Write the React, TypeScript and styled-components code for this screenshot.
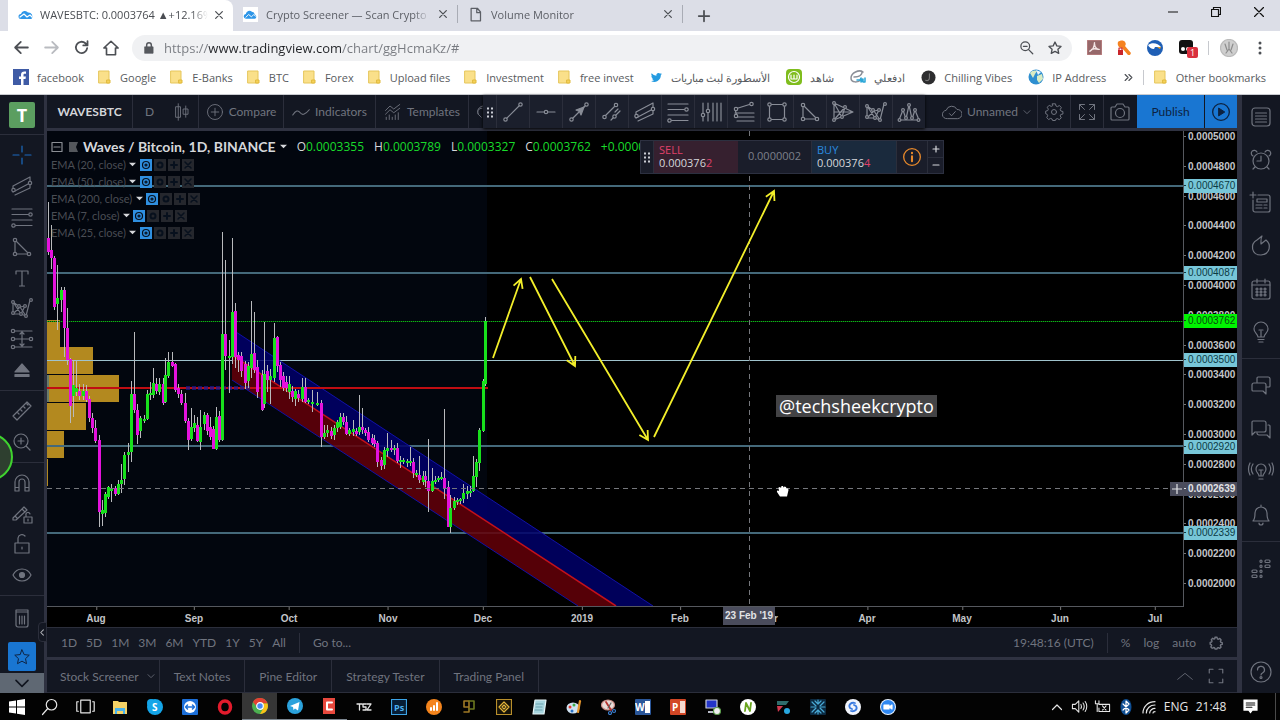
import React from "react";
import styled, { createGlobalStyle, css } from "styled-components";

const ui = `"Open Sans", "Noto Sans", sans-serif`;
const tv = `Lato, "Open Sans", sans-serif`;
const arial = `"Liberation Sans", Arial, sans-serif`;
const line = "#2b2e3b";
const panel = "#131722";
const frame = "#2f3241";
const muted = "#70747f";
const blue = "#1976d2";

const Global = createGlobalStyle`
  * { box-sizing: border-box; }
  body { margin: 0; background: #000; font-family: ${ui}; font-size: 12px; }
  button, input { font: inherit; color: inherit; border: 0; padding: 0; margin: 0; background: none; }
  button { display: flex; align-items: center; justify-content: center; cursor: pointer; white-space: nowrap; }
  a { color: inherit; text-decoration: none; }
  svg { display: block; flex: none; }
`;

/* ---------- icons ---------- */

const Svg = styled.svg<{ $size: number }>`
  width: ${(p) => p.$size}px;
  height: ${(p) => p.$size}px;
  fill: none;
  stroke: currentColor;
  stroke-width: 1.2;
  stroke-linecap: round;
  stroke-linejoin: round;
`;

type IconProps = { size?: number; children?: React.ReactNode; box?: number };
const Icon = ({ size = 24, box = 24, children }: IconProps) => (
  <Svg $size={size} viewBox={`0 0 ${box} ${box}`} aria-hidden="true">
    {children}
  </Svg>
);

const Dots = ({ at, r = 1.7 }: { at: [number, number][]; r?: number }) => (
  <>
    {at.map(([x, y]) => (
      <circle key={`${x}-${y}`} cx={x} cy={y} r={r} fill={panel} />
    ))}
  </>
);

const TrendLine = () => (<Icon><path d="M5 19 19 5" /><Dots at={[[4.5, 19.5], [19.5, 4.5]]} /></Icon>);
const HorizontalLine = () => (<Icon><path d="M3 12h18" /><Dots at={[[12, 12]]} /></Icon>);
const ArrowLine = () => (<Icon><path d="M5 19 19 5" /><path d="m17 7-3 8-1.500-3.500L9 10z" fill="currentColor" /><Dots at={[[4.5, 19.5], [19.5, 4.500]]} /></Icon>);
const RayLines = () => (<Icon><path d="M4 17 16 5M11 20 20 11M15 12l3-3" /><Dots at={[[4.500, 17], [16, 5], [14.500, 16.500]]} /></Icon>);
const Channel = () => (<Icon><path d="M3 12 20 3v6L3 18zM5 21 20 14V8" /><Dots at={[[3.500, 16], [20, 9]]} /></Icon>);
const FibLines = () => (<Icon><path d="M2 4h20M2 9.500h17M2 15h20M5 20.500h17" /><Dots at={[[20.500, 9.500], [3.500, 20.500]]} /></Icon>);
const VerticalFib = () => (<Icon><path d="M4 3v18M9 3v18M14 3v18M18 3v18M22 3v18" /><Dots at={[[4, 15], [9, 11]]} /></Icon>);
const FibFan = () => (<Icon><path d="M3 9 19 4M3 13h19M5 17h17M5 21h17M3 9l2 8" /><Dots at={[[4, 9], [19.500, 4], [4, 16]]} /></Icon>);
const RectTool = () => (<Icon><path d="M4.500 4.500h15v15h-15z" /><Dots at={[[4.500, 4.500], [19.500, 4.500], [4.500, 19.500], [19.500, 19.500]]} /></Icon>);
const TriangleTool = () => (<Icon><path d="M5 5v14h14z" /><Dots at={[[5, 5], [5, 19], [19, 19]]} /></Icon>);
const Gann = () => (<Icon><path d="M3 3v17L22 12 3 3l8 14L14 7 3 20M3 12l17 0" /><Dots r={1.400} at={[[3, 3], [3, 20], [11, 17], [14, 7]]} /></Icon>);
const Pattern = () => (<Icon><path d="M3 6v12l7-7 6 9 4-16M3 6l7 5 5-1-4 8zM3 18l8 0 5 2" /><Dots r={1.400} at={[[3, 6], [3, 17], [9, 10], [15, 10], [11, 18], [16, 20], [21, 4]]} /></Icon>);
const Waves = () => (<Icon><path d="m2 20 4-10 3 9 3-14 3 14 3-9 4 10M2 20h20" /><Dots r={1.400} at={[[2.500, 20], [6, 10], [9, 18], [12, 5], [15, 18], [18, 10], [21.500, 20]]} /></Icon>);
const Cross = () => (<Icon><path d="M12 3v6M12 15v6M3 12h6M15 12h6" stroke="#1c6bc0" /></Icon>);
const TextTool = () => (<Icon><path d="M6 8V5h12v3M12 5v15M9.500 20h5" /></Icon>);
const Measure = () => (<Icon><path d="M2 4h20M2 12h20M2 20h20M12 5v14M10 7l2-2 2 2M10 17l2 2 2-2" /><Dots at={[[3, 4], [3, 12], [21, 12], [3, 20]]} /></Icon>);
const Eject = () => (<Icon><path d="m12 6 7 8H5zM5 16.500h14v2H5z" fill="currentColor" /></Icon>);
const Ruler = () => (<Icon><path d="M3 17 17 3l4 4L7 21zM7 13l2 2M10 10l2 2M13 7l2 2M16 4l2 2" /></Icon>);
const ZoomIn = () => (<Icon><circle cx="11" cy="11" r="7" /><path d="M11 8v6M8 11h6M16.500 16.500 20 20" /></Icon>);
const Magnet = () => (<Icon><path d="M5 20v-9a7 7 0 0 1 14 0v9h-4v-9a3 3 0 0 0-6 0v9zM5 16.500h4M15 16.500h4" /></Icon>);
const PencilLock = () => (<Icon><path d="m3 16 11-11 3 3L6 18H3zM5 14l2 2M12 7l3 3M14 15h8v6h-8zM16 15v-2a2 2 0 0 1 4-1M18 17v2" /></Icon>);
const Lock = () => (<Icon><path d="M5 11h14v10H5zM8 11V6a4 4 0 0 1 7-2M12 15v2" /></Icon>);
const Eye = () => (<Icon><path d="M3 12c4-8 14-8 18 0-4 8-14 8-18 0z" /><circle cx="12" cy="12" r="2.500" fill="currentColor" /></Icon>);
const Trash = () => (<Icon><path d="M6 6h12v13a2 2 0 0 1-2 2H8a2 2 0 0 1-2-2zM6 6V4h12v2M9.500 10v8M12 10v8M14.500 10v8" /></Icon>);
const Star = ({ size = 24 }: { size?: number }) => (<Icon size={size}><path d="m12 3.500 2.600 5.600 6.100.7-4.500 4.200 1.200 6-5.400-3-5.400 3 1.200-6L3.300 9.800l6.100-.7z" /></Icon>);
const Chevron = ({ size = 10, up }: { size?: number; up?: boolean }) => (
  <Icon size={size}><path d={up ? "m3 17 9-9 9 9" : "m3 8 9 9 9-9"} strokeWidth="2.400" /></Icon>
);

const List = () => (<Icon><rect x="3" y="3" width="18" height="18" rx="3" /><path d="M6.500 8h11M6.500 11h11M6.500 14h11M6.500 17h11" /></Icon>);
const Alarm = () => (<Icon><circle cx="12" cy="13" r="8" /><path d="M12 8v5H8M4 8a3 3 0 1 1 4-4M16 4a3 3 0 1 1 4 4M6 19l-2 2M18 19l2 2" /></Icon>);
const News = () => (<Icon><path d="M9 4h10a2 2 0 0 1 2 2v13a2 2 0 0 1-2 2H6a2 2 0 0 1-2-2V9M4 1v6M1 4h6M8 8h10v3H8zM7 14h6M15 14h3M7 17h6M15 17h3" /></Icon>);
const Fire = () => (<Icon><path d="M13 2c-1.500 2.500-1 5-1 8l5-4c5 4 5 14-5 15C2 21 1 10 8 6l5-4z" /></Icon>);
const Calendar = () => (<Icon><rect x="3" y="4" width="18" height="18" rx="2" /><path d="M3 8h18M8 2v4M16 2v4" />{[12, 15, 18].map((y) => [8, 12, 16].map((x) => <circle key={`${x}${y}`} cx={x} cy={y} r="1" />))}</Icon>);
const Bulb = () => (<Icon><path d="M9 17c0-3-4-4-4-8a7 7 0 0 1 14 0c0 4-4 5-4 8zM9 19.500h6M10 22h4M12 17v-6M10 10h4" /></Icon>);
const Chat = () => (<Icon><path d="M8 8V4a1 1 0 0 1 1-1h10a2 2 0 0 1 2 2v7a1 1 0 0 1-1 1h-2M5 9h10a2 2 0 0 1 2 2v9l-3-3H4a1 1 0 0 1-1-1v-5a2 2 0 0 1 2-2z" /></Icon>);
const Chats = () => (<Icon><path d="M3 18V5a1 1 0 0 1 1-1h11a2 2 0 0 1 2 2v7a2 2 0 0 1-2 2H6zM19 8h1a1 1 0 0 1 1 1v12l-3-3H10a2 2 0 0 1-2-2" /></Icon>);
const Broadcast = () => (<Icon size={28} box={28}><path d="M12 18c0-3-3-3-3-7a5 5 0 0 1 10 0c0 4-3 4-3 7zM12 21h4M14 18v-6M12 12h4M6 6c-2 3-2 7 0 10M22 6c2 3 2 7 0 10M3 5c-2 4-2 8 0 12M25 5c2 4 2 8 0 12" /></Icon>);
const Bell = () => (<Icon><path d="M4 18c2-2 2-4 2-8a6 6 0 0 1 12 0c0 4 0 6 2 8zM10 20a2 2 0 0 0 4 0M12 2v2" /></Icon>);
const Panels = () => (<Icon>{[[11, 3, 2], [11, 8, 2], [16, 3, 5], [16, 8, 5], [3, 13, 5], [3, 18, 5], [11, 13, 2], [11, 18, 2]].map(([x, y, w]) => <rect key={`${x}${y}`} x={x} y={y} width={w} height="2.500" rx="1" />)}</Icon>);
const Help = () => (<Icon><circle cx="12" cy="12" r="10" /><path d="M8.500 10a3.500 3.500 0 1 1 5 3c-1 .5-1.500 1-1.500 2" /><circle cx="12" cy="17.500" r="1" /></Icon>);
const Gear = ({ size = 22, weight = 1.2 }: { size?: number; weight?: number }) => (
  <Icon size={size}>
    <path strokeWidth={weight} d="M10.200 3h3.600l.6 2.600 1.700.8 2.400-1.400 2.300 2.500-1.300 2.300.7 1.800 2.500.6v3l-2.600.6-.7 1.700 1.400 2.300-2.500 2.200-2.200-1.300-1.800.7-.6 1.600h-3.400l-.6-1.800-1.800-.7-2.300 1.300-2.400-2.300 1.300-2.200-.7-1.700L2 14.800v-3l2.500-.7.7-1.700L3.900 7.100l2.400-2.400 2.300 1.400 1.500-.7z" transform="translate(0 -.8)" />
    {weight < 2 && <circle cx="12" cy="12" r="3" />}
  </Icon>
);
const Expand = () => (<Icon size={20}><path d="M3 9V3h6M3 3l6 6M21 9V3h-6M21 3l-6 6M3 15v6h6M3 21l6-6M21 15v6h-6M21 21l-6-6" /></Icon>);
const Camera = () => (<Icon><path d="M4 7h3l2-3h6l2 3h3a1 1 0 0 1 1 1v11a1 1 0 0 1-1 1H4a1 1 0 0 1-1-1V8a1 1 0 0 1 1-1z" /><circle cx="12" cy="13" r="4.500" /></Icon>);
const CloudCheck = () => (<Icon size={20}><path d="M6 20a5 5 0 0 1-1-10 7 7 0 0 1 13-1 5.500 5.500 0 0 1 1 11zM9 14l2.500 2.500 4.500-5" /></Icon>);
const Candles = () => (<Icon size={18}><path d="M7 1v22M4 5h6v14H4zM17 4v15M14 8h6v7h-6z" fill={panel} /></Icon>);
const PlusCircle = () => (<Icon size={18}><circle cx="12" cy="12" r="10" /><path d="M12 7v10M7 12h10" /></Icon>);
const Wave = () => (<Icon size={18}><path d="M1 16c4-6 7-7 10-3s7 2 12-4" strokeWidth="1.500" /></Icon>);
const TemplatesIcon = () => (<Icon size={18}><path d="m2 10 6-6 5 4 8-6M2 15l6-6 5 4 8-6M3 22v-3M7 22v-6M11 22v-3M15 22v-6M19 22v-9" /></Icon>);
const Fullscreen = () => (<Icon size={18}><path d="M3 8V3h5M16 3h5v5M21 16v5h-5M8 21H3v-5" strokeWidth="1.500" /></Icon>);

/* ---------- browser chrome ---------- */

const Page = styled.div`
  display: flex;
  flex-direction: column;
  min-height: 100vh;
  position: relative;
  overflow: hidden;
`;

const TabStrip = styled.div`
  display: flex;
  height: 31px;
  padding-left: 8px;
  background: #dcdee7;
  color: #5c5f66;
`;

const Tab = styled.div<{ $active?: boolean }>`
  display: flex;
  align-items: center;
  width: 225px;
  padding: 0 9px 0 10px;
  ${(p) =>
    p.$active
      ? css`
          gap: 6px;
          height: 31px;
          padding-bottom: 2px;
          background: #fff;
          border-radius: 0 8px 0 0;
          color: #4a4d52;
        `
      : css`
          gap: 8px;
          border-right: 1px solid #a9acb5;
          height: 18px;
          margin-top: 5px;
        `}
`;

const TabTitle = styled.span`
  flex: 1;
  overflow: hidden;
  white-space: nowrap;
  font-size: 11px;
  mask-image: linear-gradient(90deg, #000 90%, transparent);
`;

const ChromeButton = styled.button<{ $w?: number; $dim?: boolean }>`
  width: ${(p) => p.$w ?? 30}px;
  color: ${(p) => (p.$dim ? "#b9bbc0" : "#4c4f54")};
`;

const WindowButtons = styled.div`
  display: flex;
  height: 24px;
  margin-left: auto;
`;

const WindowButton = styled.button`
  width: 43px;
  color: #111;
`;

const NavBar = styled.div`
  display: flex;
  align-items: center;
  height: 33px;
  padding: 0 9px 0 6px;
  background: #fff;
`;

const Omnibox = styled.div`
  display: flex;
  align-items: center;
  flex: 1;
  height: 26px;
  margin: 0 7px 0 6px;
  padding: 0 7px 0 10px;
  border-radius: 13px;
  background: #f0f1f3;
  color: #55585d;
  gap: 8px;
`;

const Url = styled.input`
  flex: 1;
  min-width: 0;
  outline: 0;
  font-size: 13px;
  color: transparent;
  background: linear-gradient(90deg, #777a80 44px, #222428 44px, #222428 178px, #777a80 178px);
  background-clip: text;
`;

const Bookmarks = styled.nav`
  display: flex;
  align-items: center;
  height: 31px;
  padding: 0 14px 4px 13px;
  gap: 12px;
  background: #fff;
  color: #585b60;
  font-size: 11px;
  border-bottom: 1px solid #c9cbd0;
`;

const Bookmark = styled.a<{ $wide?: boolean }>`
  display: flex;
  align-items: center;
  gap: 8px;
  padding-left: ${(p) => (p.$wide ? 4 : 0)}px;
  white-space: nowrap;
`;

const Rule = styled.i<{ $h: number; $c?: string }>`
  width: 1px;
  height: ${(p) => p.$h}px;
  background: ${(p) => p.$c ?? "#c7c9ce"};
  flex: none;
`;

const Extensions = styled.div`
  display: flex;
  padding-right: 5px;
`;

const OtherBookmarks = styled.div`
  display: flex;
  align-items: center;
  gap: 8px;
  margin-left: auto;
`;

const CloudLogo = () => (
  <Icon size={15} box={16}>
    <path d="M0 0h16v16H0z" fill="#fff" stroke="none" />
    <path d="M3.500 12.500a2.500 2.500 0 0 1-.5-5A4 4 0 0 1 9.500 5a3.500 3.500 0 0 1 3 3 2.500 2.500 0 0 1 .5 4.500z" fill="#2e96e8" stroke="none" />
    <path d="m3 11 3-3 3 2.500L11.500 8l2 2" stroke="#fff" strokeWidth="1" />
  </Icon>
);
const CloseIcon = () => (<Icon size={10}><path d="M4 4l16 16M20 4 4 20" strokeWidth="3" /></Icon>);
const Folder = () => (
  <Icon size={16} box={16}>
    <path d="M3 2h10v12H3z" fill="#fae08a" stroke="#e6c65a" strokeWidth="1" />
    <path d="M11 11h3v3h-3z" fill="#f6d25a" stroke="#e0b93c" strokeWidth="1" />
  </Icon>
);
const Facebook = () => (
  <Icon size={16} box={16}>
    <path d="M0 0h16v16H0z" fill="#3f5ba5" stroke="none" />
    <path d="M10.500 16V10h2l.4-2.500h-2.400V6c0-.8.400-1.300 1.300-1.300H13V2.600C10 2 8 3 8 5.600v1.900H6V10h2v6z" fill="#fff" stroke="none" />
  </Icon>
);
const Twitter = () => (
  <Icon size={13}>
    <path d="M22 5.500c-.8.400-1.600.6-2.400.7.900-.5 1.500-1.300 1.800-2.300-.8.500-1.700.8-2.600 1A4.200 4.200 0 0 0 11.700 8.700 12 12 0 0 1 3 4.300c-1.100 2-.6 4.300 1.300 5.600-.7 0-1.300-.2-1.900-.5 0 2 1.400 3.800 3.400 4.200-.6.200-1.300.2-1.900.1.500 1.700 2.100 2.900 3.900 2.900A8.500 8.500 0 0 1 2 18.400 12 12 0 0 0 20 8z" fill="#249be0" stroke="none" />
  </Icon>
);
const Shahid = () => (
  <Icon size={16} box={16}>
    <rect width="16" height="16" rx="4" fill="#7fbd1d" stroke="none" />
    <circle cx="8" cy="8" r="5.500" stroke="#fff" />
    <path d="M5 6v4h6V6M8 6v4" stroke="#fff" />
  </Icon>
);
const Edfaly = () => (
  <Icon size={16} box={16}>
    <path d="M13 3C9 0 1 4 1 9c0 5 7 5 11 1M4 8c3 0 8-1 8-5" stroke="#8b8f98" strokeWidth="1.500" />
    <path d="M7 11h3l1-2v4l2-3v3h2V9" stroke="#2aa6d8" strokeWidth="1.500" />
  </Icon>
);
const Vibes = () => (
  <Icon size={15} box={16}>
    <circle cx="8" cy="8" r="7.500" fill="#2d2d2f" stroke="none" />
    <path d="M5 11c2 1 4 0 4-3V4" stroke="#777" />
  </Icon>
);
const Globe = () => (
  <Icon size={16} box={16}>
    <circle cx="8" cy="8" r="7.500" fill="#2f8fd0" stroke="none" />
    <path d="M2 4c2-3 6-3 7-2L7 5 5 9zM9 7l5-2 1 5-4 4-2-3z" fill="#d9ecc4" stroke="none" />
    <path d="M8 1l5 2-3 3z" fill="#e9f6ff" stroke="none" />
  </Icon>
);

const bookmarks: [string, React.ReactNode, boolean?][] = [
  ["facebook", <Facebook />],
  ["Google", <Folder />],
  ["E-Banks", <Folder />],
  ["BTC", <Folder />],
  ["Forex", <Folder />],
  ["Upload files", <Folder />],
  ["Investment", <Folder />],
  ["free invest", <Folder />],
  ["الأسطورة لبث مباريات", <Twitter />, true],
  ["شاهد", <Shahid />, true],
  ["ادفعلي", <Edfaly />, true],
  ["Chilling Vibes", <Vibes />, true],
  ["IP Address", <Globe />, true],
];

const Browser = () => (
  <header>
    <TabStrip>
      <Tab $active>
        <Icon size={16} box={16}><path d="M3 12a2.500 2.500 0 0 1 0-5 4 4 0 0 1 7-1.500A4 4 0 0 1 13.500 12z" fill="#2e96e8" stroke="none" /><path d="m2 10 4-3 3 3 3-2 2 2" stroke="#fff" /></Icon>
        <TabTitle>WAVESBTC: 0.0003764 ▲+12.16%</TabTitle>
        <ChromeButton $w={10} aria-label="Close tab"><CloseIcon /></ChromeButton>
      </Tab>
      <Tab>
        <CloudLogo />
        <TabTitle>Crypto Screener — Scan Crypto A</TabTitle>
        <ChromeButton $w={10} aria-label="Close tab"><CloseIcon /></ChromeButton>
      </Tab>
      <Tab>
        <Icon size={15}><path d="M5 2h10l5 6v14H5zM14 2v7h6" strokeWidth="2" /></Icon>
        <TabTitle>Volume Monitor</TabTitle>
        <ChromeButton $w={10} aria-label="Close tab"><CloseIcon /></ChromeButton>
      </Tab>
      <ChromeButton $w={41} aria-label="New tab"><Icon size={14}><path d="M12 3v18M3 12h18" strokeWidth="3" /></Icon></ChromeButton>
      <WindowButtons>
        <WindowButton aria-label="Minimise"><Icon size={10} box={10}><path d="M0 5h10" /></Icon></WindowButton>
        <WindowButton aria-label="Restore"><Icon size={10} box={10}><path d="M.5 2.500h7v7h-7zM2.500 2.500v-2h7v7h-2" /></Icon></WindowButton>
        <WindowButton aria-label="Close"><Icon size={10} box={10}><path d="m.5.5 9 9M9.500.5l-9 9" /></Icon></WindowButton>
      </WindowButtons>
    </TabStrip>
    <NavBar>
      <ChromeButton aria-label="Back"><Icon size={17}><path d="M21 12H4M11 4l-8 8 8 8" strokeWidth="2.500" /></Icon></ChromeButton>
      <ChromeButton $dim aria-label="Forward"><Icon size={17}><path d="M3 12h17M13 4l8 8-8 8" strokeWidth="2.500" /></Icon></ChromeButton>
      <ChromeButton aria-label="Reload"><Icon size={17}><path d="M20 13a8 8 0 1 1-2.500-7L20 8.500M20.500 3v6h-6" strokeWidth="2.500" /></Icon></ChromeButton>
      <ChromeButton aria-label="Home"><Icon size={18}><path d="M6 12H2.500L12 3l9.500 9H18v9H6z" strokeWidth="2.200" /></Icon></ChromeButton>
      <Omnibox>
        <Icon size={14}><path d="M5 10h14v11H5z" fill="currentColor" /><path d="M8 10V7a4 4 0 0 1 8 0v3" strokeWidth="2.500" /></Icon>
        <Url aria-label="Address" defaultValue="https://www.tradingview.com/chart/ggHcmaKz/#" />
        <ChromeButton $w={21} aria-label="Zoom"><Icon size={15}><circle cx="10" cy="10" r="7" strokeWidth="2" /><path d="m15 15 7 7M7 10h6" strokeWidth="2" /></Icon></ChromeButton>
        <ChromeButton $w={20} aria-label="Bookmark"><Icon size={16}><path d="m12 3 2.700 5.800 6.300.8-4.600 4.300 1.200 6.200-5.600-3-5.600 3 1.200-6.200L3 9.600l6.300-.8z" strokeWidth="2" /></Icon></ChromeButton>
      </Omnibox>
      <Extensions>
        <ChromeButton aria-label="Acrobat"><Icon size={15} box={16}><path d="M0 0h16v16H0z" fill="#96686a" stroke="#c98a8a" /><path d="M8 3c0 5-3 8-5 9M8 4c0 4 3 6 5 6M5 10c2-1 4-1 7 0" stroke="#f3e5e5" strokeWidth="1.500" /></Icon></ChromeButton>
        <ChromeButton aria-label="Key"><Icon size={16} box={16}><path d="M2 2c2-2 6-2 7 0 1 1 1 3 0 4l6 7-1 2h-2L6 8C3 8 1 5 2 2z" fill="#f58220" stroke="none" /><path d="M2 10h5v5H2z" fill="#c9252b" stroke="none" /><path d="M3 10V8h3v2" stroke="#c9252b" /></Icon></ChromeButton>
        <ChromeButton $w={32} aria-label="Eagle"><Icon size={16} box={16}><circle cx="8" cy="8" r="8" fill="#1f5fb5" stroke="none" /><path d="M1 5c4-3 10-2 13 2l-6 0-1 2C4 9 2 7 1 5z" fill="#fff" stroke="none" /><path d="M10 7l4 0-1 2z" fill="#f3a01e" stroke="none" /></Icon></ChromeButton>
        <ChromeButton $w={32} aria-label="Monkey, 1 notice">
          <Icon size={22} box={22}><rect x="3" y="3" width="14" height="14" rx="3" fill="#111" stroke="none" /><circle cx="7" cy="12" r="2" fill="#fff" stroke="none" /><circle cx="12" cy="12" r="2" fill="#fff" stroke="none" /><rect x="11" y="10" width="11" height="11" rx="2" fill="#d9303e" stroke="none" /><text x="14" y="19" fontSize="9" fill="#fff" stroke="none">1</text></Icon>
        </ChromeButton>
      </Extensions>
      <Rule $h={14} />
      <ChromeButton $w={40} aria-label="Profile"><Icon size={18} box={18}><circle cx="9" cy="9" r="8.500" fill="#cfcfcf" stroke="#bbb" /><path d="M9 3v7l-3 4M9 10l3 4M5 5l2 6M13 5l-2 6" stroke="#8d8d8d" /></Icon></ChromeButton>
      <ChromeButton $w={22} aria-label="Menu"><Icon size={14} box={14}>{[2, 7, 12].map((y) => <circle key={y} cx="7" cy={y} r="1.500" fill="currentColor" stroke="none" />)}</Icon></ChromeButton>
    </NavBar>
    <Bookmarks aria-label="Bookmarks">
      {bookmarks.map(([name, icon, wide]) => (
        <Bookmark key={name} href="#" $wide={wide}>{icon}{name}</Bookmark>
      ))}
      <OtherBookmarks>
        <ChromeButton $w={12} aria-label="More bookmarks"><Icon size={9}><path d="m3 4 8 8-8 8M13 4l8 8-8 8" strokeWidth="3" /></Icon></ChromeButton>
        <Rule $h={15} />
        <Bookmark href="#"><Folder />Other bookmarks</Bookmark>
      </OtherBookmarks>
    </Bookmarks>
  </header>
);

/* ---------- trading workspace ---------- */

const Workspace = styled.main`
  display: flex;
  flex: 1;
  background: ${frame};
  color: ${muted};
  font-family: ${tv};
`;

const LeftRail = styled.aside`
  display: flex;
  flex-direction: column;
  width: 44px;
  margin-right: 3px;
  background: ${panel};
`;

const Avatar = styled.button`
  width: 26px;
  height: 26px;
  margin: 7px 9px 6px;
  border-radius: 2px;
  background: #5b9e60;
  color: #fff;
  font: bold 18px ${ui};
`;

const ToolGroup = styled.div<{ $h: number }>`
  display: flex;
  flex-direction: column;
  height: ${(p) => p.$h}px;
  padding: 5px 0;
  border-top: 1px solid ${line};
  button { flex: 1; min-height: 0; }
`;

const Favorites = styled.button`
  width: 28px;
  height: 29px;
  margin: auto 8px 2px;
  border-radius: 2px;
  background: ${blue};
  color: #0e2444;
`;

const RailMore = styled.button`
  height: 20px;
  background: #5f6873;
  color: #11151f;
`;

const RightRail = styled.aside`
  display: flex;
  flex-direction: column;
  width: 38px;
  margin-left: 5px;
  background: ${panel};
`;

const RailGroup = styled.div`
  padding: 5px 0;
  border-bottom: 1px solid ${line};
  &:first-child { padding-top: 0; }
  &:nth-child(3) { border: 0; }
`;

const RailButton = styled.button`
  width: 100%;
  height: 43px;
`;

const Center = styled.section`
  display: flex;
  flex-direction: column;
  flex: 1;
  min-width: 0;
`;

const TopBar = styled.div`
  position: relative;
  display: flex;
  height: 33px;
  margin-bottom: 3px;
  background: ${panel};
`;

const TopButton = styled.button<{ $w?: number; $strong?: boolean; $plain?: boolean }>`
  gap: 5px;
  width: ${(p) => (p.$w ? `${p.$w}px` : "auto")};
  border-right: ${(p) => (p.$plain ? 0 : 1)}px solid ${line};
  color: ${(p) => (p.$strong ? "#d3d5da" : "inherit")};
  font-weight: ${(p) => (p.$strong ? 700 : 400)};
`;

const TopRight = styled.div`
  display: flex;
  margin-left: auto;
`;

const Publish = styled.button<{ $w: number }>`
  width: ${(p) => p.$w}px;
  margin-left: 1px;
  background: ${blue};
  color: #0d2240;
`;

const FloatingTools = styled.div`
  position: absolute;
  top: 0;
  left: 436px;
  display: flex;
  height: 33px;
  padding-left: 1px;
  background: #1b1f2c;
  box-shadow: 0 1px 3px #000;
  color: #898d97;
`;

const FloatingTool = styled.button`
  width: 33px;
  border-left: 1px solid ${line};
`;

const Grip = styled.span`
  display: flex;
  align-items: center;
  justify-content: center;
  width: 12px;
  color: #c9ccd3;
`;

const GripDots = () => (
  <Icon size={12} box={12}>
    {[1.500, 5.500, 9.500].map((y) => [3, 7].map((x) => <rect key={`${x}${y}`} x={x} y={y} width="2" height="2" fill="currentColor" stroke="none" />))}
  </Icon>
);

const ChartArea = styled.div`
  display: grid;
  grid-template-columns: 1fr 54px;
  grid-template-rows: 1fr 20px;
  flex: 1;
  min-height: 476px;
  background: #000;
`;

const Plot = styled.div`
  position: relative;
  overflow: hidden;
  border-bottom: 1px solid #55585e;
`;

const PlotSvg = styled.svg`
  position: absolute;
  inset: 0;
  width: 100%;
  height: 100%;
`;

const Legend = styled.div`
  position: absolute;
  top: 6px;
  left: 4px;
  color: #4a4d54;
  font-size: 11px;
  white-space: nowrap;
`;

const LegendTitle = styled.div`
  display: flex;
  align-items: center;
  height: 19px;
  gap: 4px;
  color: #d5d7db;
  font-size: 14px;
  font-weight: 700;
`;

const Ohlc = styled.span`
  color: #d5d7db;
  font: 400 12px ${ui};
  margin-left: 6px;
  b { color: #19dc2b; font-weight: 400; }
`;

const StudyRow = styled.div`
  display: flex;
  align-items: center;
  height: 17px;
  gap: 2px;
`;

const StudyButton = styled.button<{ $on?: boolean }>`
  width: 12px;
  height: 12px;
  background: ${(p) => (p.$on ? "#2f8fe0" : "#25272d")};
  color: #07101d;
`;

const StudyCaret = styled.button`
  width: 10px;
  color: #d5d7db;
`;

const Quote = styled.div`
  position: absolute;
  top: 9px;
  left: 593px;
  display: flex;
  height: 34px;
  border: 1px solid #2c3040;
  background: #1a1d2a;
  color: #d5d7db;
  font: 11px/13px ${ui};
`;

const Side = styled.button<{ $tone: "sell" | "buy" }>`
  display: block;
  width: 85px;
  padding: 0 0 3px 5px;
  text-align: left;
  border-left: 1px solid ${line};
  background: ${(p) => (p.$tone === "sell" ? "#36202f" : "#1a2a3d")};
  span { display: block; color: ${(p) => (p.$tone === "sell" ? "#e0406a" : "#2a8ae0")}; }
  em { font-style: normal; color: #e0406a; }
`;

const Spread = styled.span`
  width: 73px;
  line-height: 30px;
  text-align: center;
  color: #7d808a;
`;

const InfoButton = styled.button`
  width: 31px;
  color: #e8892b;
  border-left: 1px solid ${line};
`;

const Stepper = styled.div`
  display: grid;
  width: 16px;
  border-left: 1px solid ${line};
  button + button { border-top: 1px solid ${line}; }
`;

const Handle = styled.div`
  position: absolute;
  top: 264px;
  left: 729px;
  padding: 0 3px;
  background: #434345;
  color: #fff;
  font: 18px/22px ${ui};
`;

const PriceAxis = styled.div`
  position: relative;
  border-left: 1px solid #55585e;
  font: bold 10px ${arial};
  color: #c3c5c9;
`;

const PriceLabel = styled.span<{ $bg?: string; $fg?: string }>`
  position: absolute;
  left: 0;
  right: 0;
  height: 14px;
  padding-left: 4px;
  line-height: 14px;
  transform: translateY(-50%);
  background: ${(p) => p.$bg ?? "transparent"};
  color: ${(p) => p.$fg ?? "inherit"};
  font-weight: ${(p) => (p.$fg && p.$fg !== "#e2e3e6" ? 400 : 700)};
  &::before {
    content: "";
    position: absolute;
    left: 0;
    top: 6px;
    width: 2px;
    height: 1px;
    background: ${(p) => p.$fg ?? "#777"};
  }
`;

const AddAlert = styled.button`
  position: absolute;
  right: 100%;
  width: 14px;
  height: 14px;
  transform: translateY(-50%);
  background: #4a4c5c;
  color: #e2e3e6;
`;

const TimeAxis = styled.div`
  position: relative;
  font: bold 10px ${arial};
  color: #c3c5c9;
`;

const TimeLabel = styled.span`
  position: absolute;
  top: 0;
  padding-top: 6px;
  transform: translateX(-50%);
  &::before {
    content: "";
    position: absolute;
    left: 50%;
    top: 0;
    width: 1px;
    height: 3px;
    background: #777;
  }
`;

const CrosshairDate = styled.span`
  position: absolute;
  top: 0;
  width: 52px;
  height: 18px;
  line-height: 18px;
  text-align: center;
  transform: translateX(-50%);
  background: #4a4c5c;
  color: #e2e3e6;
`;

const RangeBar = styled.div`
  display: flex;
  align-items: center;
  height: 30px;
  padding: 0 14px;
  border-top: 1px solid ${line};
  background: ${panel};
`;

const Ranges = styled.div`
  display: flex;
  gap: 9px;
`;

const GoTo = styled.button`
  height: 20px;
  margin-left: 13px;
  padding-left: 13px;
  border-left: 1px solid ${line};
`;

const RangeRight = styled.div`
  display: flex;
  align-items: center;
  gap: 13px;
  margin-left: auto;
`;

const Footer = styled.div`
  display: flex;
  height: 33px;
  margin-top: 3px;
  border-bottom: 1px solid ${line};
  background: ${panel};
`;

const FooterTab = styled.button`
  gap: 8px;
  padding: 0 14px;
  border-right: 1px solid ${line};
  &:first-child { padding: 0 4px 0 13px; }
`;

const FooterTools = styled.div`
  display: flex;
  gap: 14px;
  margin-left: auto;
  padding-right: 12px;
`;

/* price scale: the top of the plot and the height of one unit of the last digits */
const PLOT = { left: 47, top: 131, width: 1136, height: 475 };
const priceY = (p: number) => 137 + (5000 - p) * 0.14867;
const topOf = (p: number) => `${((priceY(p) - PLOT.top) / PLOT.height) * 100}%`;
const leftOf = (x: number) => `${((x - PLOT.left) / PLOT.width) * 100}%`;
const fmt = (p: number) => `0.000${p}`;

const scale = Array.from({ length: 16 }, (_, i) => 5000 - i * 200);
const levels = [4670, 4087, 3500, 2920, 2339];
const months: [string, number][] = [
  ["Aug", 96], ["Sep", 194], ["Oct", 289], ["Nov", 388], ["Dec", 483], ["2019", 582],
  ["Feb", 680], ["Mar", 769], ["Apr", 867], ["May", 962], ["Jun", 1060], ["Jul", 1155],
];

/* x, high, low, body top, body bottom, rising */
const candles: [number, number, number, number, number, 0 | 1][] = [
  [48, 202, 255, 238, 252, 0], [51, 225, 269, 250, 258, 0], [54, 256, 310, 258, 307, 0],
  [57, 265, 330, 298, 304, 1], [61, 287, 312, 290, 300, 1], [64, 287, 357, 290, 328, 0],
  [67, 308, 365, 328, 360, 0], [70, 358, 423, 359, 406, 0], [73, 360, 417, 385, 396, 1],
  [76, 360, 396, 388, 392, 1], [79, 384, 400, 391, 396, 0], [83, 384, 400, 391, 396, 1],
  [86, 385, 402, 391, 400, 0], [89, 396, 422, 399, 418, 0], [92, 413, 433, 418, 428, 0],
  [95, 420, 443, 428, 441, 0], [99, 435, 527, 440, 512, 0], [102, 500, 526, 510, 514, 1],
  [105, 492, 517, 494, 513, 1], [108, 486, 499, 487, 497, 1], [111, 484, 502, 488, 491, 1],
  [115, 486, 496, 488, 494, 0], [118, 480, 495, 484, 494, 1], [121, 464, 493, 480, 484, 1],
  [124, 452, 485, 455, 479, 1], [128, 443, 472, 452, 455, 1], [131, 381, 462, 394, 452, 1],
  [134, 332, 413, 394, 410, 0], [137, 404, 444, 410, 435, 0], [140, 416, 438, 418, 431, 1],
  [144, 415, 423, 419, 421, 1], [147, 390, 420, 394, 419, 1], [150, 382, 400, 393, 395, 1],
  [153, 368, 398, 383, 395, 1], [156, 378, 394, 384, 391, 0], [159, 378, 395, 384, 392, 1],
  [163, 378, 405, 384, 403, 0], [165, 358, 403, 375, 402, 1], [168, 352, 378, 362, 376, 1],
  [172, 352, 367, 362, 366, 0], [175, 363, 392, 364, 390, 0], [178, 384, 398, 388, 394, 0],
  [181, 390, 405, 394, 403, 0], [185, 393, 423, 403, 421, 0], [188, 418, 450, 421, 440, 0],
  [191, 408, 441, 427, 439, 1], [194, 415, 432, 423, 428, 1], [197, 417, 442, 425, 441, 0],
  [200, 410, 450, 427, 442, 1], [204, 412, 430, 415, 424, 1], [207, 413, 435, 415, 431, 0],
  [210, 417, 440, 427, 437, 0], [213, 426, 449, 429, 449, 0], [216, 407, 450, 417, 449, 1],
  [219, 411, 442, 416, 440, 0], [222, 232, 441, 334, 440, 1], [225, 260, 370, 334, 356, 0],
  [229, 340, 393, 356, 358, 1], [232, 238, 364, 312, 357, 1], [235, 303, 368, 311, 357, 0],
  [238, 352, 372, 355, 360, 0], [241, 352, 377, 356, 371, 0], [245, 361, 389, 364, 383, 0],
  [248, 362, 388, 366, 381, 1], [251, 301, 378, 354, 368, 1], [254, 312, 373, 353, 370, 0],
  [257, 360, 398, 367, 392, 0], [262, 370, 411, 375, 410, 0], [264, 322, 408, 374, 404, 1],
  [267, 365, 392, 371, 380, 0], [270, 369, 404, 376, 380, 1], [274, 323, 382, 338, 378, 1],
  [277, 336, 372, 337, 366, 0], [280, 362, 387, 365, 380, 0], [283, 372, 391, 376, 388, 0],
  [286, 376, 392, 382, 388, 0], [289, 376, 399, 384, 392, 1], [292, 386, 402, 391, 397, 0],
  [295, 389, 406, 391, 399, 1], [298, 390, 402, 394, 398, 0], [302, 378, 402, 387, 399, 1],
  [305, 378, 403, 387, 402, 0], [308, 398, 404, 400, 402, 1], [312, 390, 412, 402, 404, 1],
  [317, 392, 406, 403, 405, 1], [321, 400, 447, 403, 437, 0], [324, 425, 439, 433, 437, 1],
  [327, 425, 437, 430, 433, 1], [331, 427, 439, 431, 436, 0], [334, 425, 440, 428, 435, 1],
  [337, 420, 432, 422, 428, 1], [340, 413, 429, 417, 427, 1], [343, 413, 425, 417, 422, 0],
  [346, 416, 435, 422, 434, 0], [349, 428, 436, 430, 434, 1], [353, 420, 436, 429, 432, 1],
  [356, 428, 436, 431, 434, 0], [359, 395, 435, 427, 432, 1], [362, 408, 434, 427, 430, 0],
  [365, 428, 436, 430, 433, 0], [368, 427, 442, 432, 440, 0], [372, 434, 445, 438, 443, 0],
  [374, 435, 447, 440, 444, 0], [377, 441, 467, 443, 462, 0], [381, 457, 470, 460, 466, 0],
  [384, 447, 469, 450, 465, 1], [387, 433, 457, 448, 451, 1], [391, 440, 452, 448, 450, 0],
  [394, 445, 455, 448, 450, 1], [397, 443, 463, 448, 461, 0], [400, 456, 468, 460, 462, 1],
  [403, 458, 464, 460, 462, 1], [407, 459, 467, 461, 463, 1], [410, 447, 466, 461, 463, 1],
  [413, 458, 478, 462, 473, 0], [416, 470, 477, 473, 475, 1], [419, 456, 483, 475, 480, 0],
  [423, 471, 485, 476, 482, 1], [425, 471, 487, 476, 480, 0], [428, 439, 512, 481, 491, 0],
  [432, 468, 492, 481, 491, 1], [435, 476, 484, 480, 482, 1], [438, 476, 482, 478, 480, 1],
  [441, 472, 480, 477, 479, 1], [444, 409, 499, 478, 488, 0], [448, 481, 527, 487, 527, 0],
  [450, 495, 533, 508, 527, 1], [454, 497, 510, 501, 508, 1], [457, 498, 505, 500, 502, 1],
  [460, 498, 504, 499, 501, 1], [463, 484, 503, 493, 499, 1], [467, 486, 499, 491, 494, 1],
  [470, 486, 497, 491, 493, 1], [473, 456, 492, 476, 491, 1], [476, 459, 487, 462, 477, 1],
  [479, 428, 471, 430, 463, 1], [483, 379, 432, 381, 431, 1], [485, 317, 386, 321, 384, 1],
];

const profile: [number, number][] = [[320, 13], [347, 46], [375, 72], [403, 39], [431, 17], [459, 1]];

const arrows: [number, number, number, number][] = [
  [493, 358, 521, 279], [530, 277, 575, 366], [552, 279, 648, 440], [654, 437, 774, 191],
];

const arrowHead = ([x1, y1, x2, y2]: number[]) => {
  const a = Math.atan2(y2 - y1, x2 - x1);
  const tip = (d: number) => `${x2 - 10 * Math.cos(a + d)} ${y2 - 10 * Math.sin(a + d)}`;
  return `M${tip(0.5)}L${x2} ${y2}L${tip(-0.5)}`;
};

const Drawing = () => (
  <PlotSvg viewBox={`${PLOT.left} ${PLOT.top} ${PLOT.width} ${PLOT.height}`} preserveAspectRatio="none" role="img" aria-label="WAVESBTC daily candles">
    <path d="M47 131h440v475H47z" fill="#02060e" />
    {profile.map(([y, w]) => (
      <rect key={y} x="47" y={y} width={w} height="27" fill="#b3891f" />
    ))}
    <path d="M48 375v27" stroke="#1e6fb8" />
    {levels.map((p) =>
      p === 3500 ? (
        <path key={p} d="M47 360.500H1183" stroke="#9fc3cc" />
      ) : (
        <path key={p} d={`M47 ${Math.round(priceY(p))}H1183`} stroke="#44697a" strokeWidth="2" />
      )
    )}
    <path d="M236 332 653 606H616L236 357z" fill="#00006a" fillOpacity=".85" />
    <path d="M232 355 616 606H578L232 380z" fill="#640008" fillOpacity=".85" />
    <path d="M236 332 653 606M232 380 578 606" stroke="#1111a8" />
    <path d="M232 355 616 606" stroke="#c4101c" strokeWidth="1.500" />
    <path d="M47 388H488" stroke="#c00d12" strokeWidth="2" />
    <path d="M186 388h64" stroke="#1a1a96" strokeWidth="4" strokeDasharray="4 2" opacity=".7" />
    <path d="M47 321.500H1183" stroke="#053f08" />
    <path d="M47 321.500H1183" stroke="#0cb416" strokeDasharray="1 1" />
    <g shapeRendering="crispEdges">
      {candles.map(([x, high, low, top, bottom, up]) => (
        <g key={x}>
          <rect x={x} y={high} width="1" height={low - high} fill="#b9babd" />
          <rect x={x - 1} y={top} width="3" height={bottom - top} fill={up ? "#18e01c" : "#e412dc"} />
        </g>
      ))}
    </g>
    <path d="M47 488.500H1183M749.500 131V606" stroke="#75777c" strokeDasharray="5 4" fill="none" />
    <g stroke="#f2ee2a" strokeWidth="1.800" fill="none">
      {arrows.map((a) => (
        <path key={a[0]} d={`M${a[0]} ${a[1]}L${a[2]} ${a[3]}${arrowHead(a)}`} />
      ))}
    </g>
    <path d="M780 496.500 777 492c-.5-1.500 1-2 2-1l-.5-3.500 1.500-.5 1 1 .5-2 1.500 0 .5 1.500 1-1 1.500.5.500 1.500 1.500 0 .5 1.500-1.500 6.500z" fill="#fff" />
  </PlotSvg>
);

const studies = ["EMA (20, close)", "EMA (50, close)", "EMA (200, close)", "EMA (7, close)", "EMA (25, close)"];

const Caret = ({ size = 7 }: { size?: number }) => (<Icon size={size} box={8}><path d="M0 2h8L4 6z" fill="currentColor" stroke="none" /></Icon>);

const ChartLegend = () => (
  <Legend>
    <LegendTitle>
      <Icon size={12} box={12}><path d="M1 1.500h10v9H1zM3 6h6" stroke="#8b8e94" /></Icon>
      <Icon size={12} box={12}><path d="M2 1h9L9 6l2 5H2z" fill="#54575c" stroke="none" /></Icon>
      <span>Waves / Bitcoin, 1D, BINANCE</span>
      <Caret />
      <Ohlc>O<b>0.0003355</b></Ohlc>
      <Ohlc>H<b>0.0003789</b></Ohlc>
      <Ohlc>L<b>0.0003327</b></Ohlc>
      <Ohlc>C<b>0.0003762</b></Ohlc>
      <Ohlc><b>+0.0000</b></Ohlc>
    </LegendTitle>
    {studies.map((s) => (
      <StudyRow key={s}>
        {s}
        <StudyCaret aria-label={`${s} menu`}><Caret /></StudyCaret>
        <StudyButton $on aria-label="Hide"><Icon size={10} box={10}><circle cx="5" cy="5" r="3.500" /><circle cx="5" cy="5" r="1" /></Icon></StudyButton>
        <StudyButton aria-label="Settings"><Icon size={10} box={10}><circle cx="5" cy="5" r="2.500" strokeWidth="2" /></Icon></StudyButton>
        <StudyButton aria-label="Add"><Icon size={10} box={10}><path d="M5 2v6M2 5h6" strokeWidth="2" /></Icon></StudyButton>
        <StudyButton aria-label="Remove"><Icon size={10} box={10}><path d="m2 2 6 6M8 2 2 8" strokeWidth="1.500" /></Icon></StudyButton>
      </StudyRow>
    ))}
  </Legend>
);

const QuotePanel = () => (
  <Quote>
    <Grip><GripDots /></Grip>
    <Side $tone="sell"><span>SELL</span>0.000376<em>2</em></Side>
    <Spread>0.0000002</Spread>
    <Side $tone="buy"><span>BUY</span>0.000376<em>4</em></Side>
    <InfoButton aria-label="Information"><Icon size={20}><circle cx="12" cy="12" r="10" strokeWidth="1.600" /><path d="M12 11v6M12 7v.5" strokeWidth="2.500" /></Icon></InfoButton>
    <Stepper>
      <button aria-label="Increase"><Icon size={8} box={8}><path d="M4 1v6M1 4h6" /></Icon></button>
      <button aria-label="Decrease"><Icon size={8} box={8}><path d="M1 4h6" /></Icon></button>
    </Stepper>
  </Quote>
);

const Chart = () => (
  <ChartArea>
    <Plot>
      <Drawing />
      <ChartLegend />
      <QuotePanel />
      <Handle>@techsheekcrypto</Handle>
    </Plot>
    <PriceAxis>
      {scale.map((p) => (
        <PriceLabel key={p} style={{ top: topOf(p) }}>{fmt(p)}</PriceLabel>
      ))}
      {levels.map((p) => (
        <PriceLabel key={p} $bg="#77c6d8" $fg="#0c3a44" style={{ top: topOf(p) }}>{fmt(p)}</PriceLabel>
      ))}
      <PriceLabel $bg="#00f400" $fg="#0b4a10" style={{ top: topOf(3762) }}>0.0003762</PriceLabel>
      <PriceLabel $bg="#4a4c5c" $fg="#e2e3e6" style={{ top: topOf(2639) }}>0.0002639</PriceLabel>
      <AddAlert aria-label="Add alert" style={{ top: topOf(2639) }}><Icon size={10} box={10}><path d="M5 0v10M0 5h10" /></Icon></AddAlert>
    </PriceAxis>
    <TimeAxis>
      {months.map(([name, x]) => (
        <TimeLabel key={name} style={{ left: leftOf(x) }}>{name}</TimeLabel>
      ))}
      <CrosshairDate style={{ left: leftOf(749) }}>23 Feb '19</CrosshairDate>
    </TimeAxis>
  </ChartArea>
);

const drawingTools: [string, React.ReactNode][] = [
  ["Trend line", <TrendLine />], ["Horizontal line", <HorizontalLine />], ["Arrow", <ArrowLine />],
  ["Disjoint channel", <RayLines />], ["Parallel channel", <Channel />], ["Fib retracement", <FibLines />],
  ["Fib time zone", <VerticalFib />], ["Fib extension", <FibFan />], ["Rectangle", <RectTool />],
  ["Triangle", <TriangleTool />], ["Gann fan", <Gann />], ["Pattern", <Pattern />], ["Elliott wave", <Waves />],
];

const leftTools: { h: number; tools: [string, React.ReactNode][] }[] = [
  { h: 256, tools: [["Cursor", <Cross />], ["Channels", <Channel />], ["Fibonacci", <FibLines />], ["Shapes", <TriangleTool />], ["Text", <TextTool />], ["Patterns", <Pattern />], ["Prediction", <Measure />], ["Icons", <Eject />]] },
  { h: 72, tools: [["Ruler", <Ruler />], ["Zoom in", <ZoomIn />]] },
  { h: 133, tools: [["Magnet", <Magnet />], ["Keep drawing", <PencilLock />], ["Lock", <Lock />], ["Visibility", <Eye />]] },
  { h: 44, tools: [["Remove", <Trash />]] },
];

const rightTools: [string, React.ReactNode][][] = [
  [["Watchlist", <List />], ["Alerts", <Alarm />], ["News", <News />], ["Hotlist", <Fire />], ["Calendar", <Calendar />], ["Ideas", <Bulb />]],
  [["Public chats", <Chat />], ["Private chats", <Chats />], ["Stream", <Broadcast />], ["Notifications", <Bell />]],
  [["Order panel", <Panels />]],
];

const Bottom = styled.div`
  margin-top: auto;
`;

const RailFold = styled.button`
  position: absolute;
  left: 38px;
  bottom: 78px;
  width: 9px;
  height: 20px;
  border-radius: 4px 0 0 4px;
  background: ${panel};
  border: 1px solid ${line};
  color: #b3b5ba;
`;

const Recorder = styled.div`
  position: absolute;
  left: -35px;
  top: 433px;
  width: 48px;
  height: 48px;
  border: 2px solid #3fd32f;
  border-radius: 50%;
  background: #2e3f2f;
`;

const TradingView = () => (
  <Workspace>
    <LeftRail>
      <Avatar aria-label="Account">T</Avatar>
      {leftTools.map((g) => (
        <ToolGroup key={g.h} $h={g.h}>
          {g.tools.map(([name, icon]) => (
            <button key={name} aria-label={name}>{icon}</button>
          ))}
        </ToolGroup>
      ))}
      <Favorites aria-label="Favorites"><Star size={20} /></Favorites>
      <RailMore aria-label="More tools"><Chevron size={16} /></RailMore>
    </LeftRail>
    <Center>
      <TopBar>
        <TopButton $w={86} $strong>WAVESBTC</TopButton>
        <TopButton $w={33} $plain>D</TopButton>
        <TopButton $w={33} aria-label="Bar style"><Candles /></TopButton>
        <TopButton $w={85}><PlusCircle />Compare</TopButton>
        <TopButton $w={92}><Wave />Indicators</TopButton>
        <TopButton $w={93}><TemplatesIcon />Templates</TopButton>
        <TopButton $w={26} $plain aria-label="Undo"><Icon size={18}><path d="M20 4C10 2 4 8 7 15l4 4M7 15c-2-4 0-8 5-8" /></Icon></TopButton>
        <TopRight>
          <TopButton $w={102}><CloudCheck />Unnamed<Chevron size={8} /></TopButton>
          <TopButton $w={33} aria-label="Settings"><Gear size={20} /></TopButton>
          <TopButton $w={33} aria-label="Full screen"><Expand /></TopButton>
          <TopButton $w={32} $plain aria-label="Snapshot"><Camera /></TopButton>
          <Publish $w={67}>Publish</Publish>
          <Publish $w={32} aria-label="Play"><Icon size={20}><circle cx="12" cy="12" r="10" strokeWidth="1.600" /><path d="m9.500 7.500 7 4.500-7 4.500z" fill="currentColor" /></Icon></Publish>
        </TopRight>
        <FloatingTools>
          <Grip><GripDots /></Grip>
          {drawingTools.map(([name, icon]) => (
            <FloatingTool key={name} aria-label={name}>{icon}</FloatingTool>
          ))}
        </FloatingTools>
      </TopBar>
      <Chart />
      <RangeBar>
        <Ranges>
          {["1D", "5D", "1M", "3M", "6M", "YTD", "1Y", "5Y", "All"].map((r) => (
            <button key={r}>{r}</button>
          ))}
        </Ranges>
        <GoTo>Go to...</GoTo>
        <RangeRight>
          <button>19:48:16 (UTC)</button>
          <Rule $h={20} $c={line} />
          <button>%</button>
          <button>log</button>
          <button>auto</button>
          <button aria-label="Scale settings"><Gear size={14} weight={2.4} /></button>
        </RangeRight>
      </RangeBar>
      <Footer>
        <FooterTab>Stock Screener<Chevron size={8} /></FooterTab>
        <FooterTab>Text Notes</FooterTab>
        <FooterTab>Pine Editor</FooterTab>
        <FooterTab>Strategy Tester</FooterTab>
        <FooterTab>Trading Panel</FooterTab>
        <FooterTools>
          <button aria-label="Open panel"><Icon size={16}><path d="m1 17 11-9 11 9" /></Icon></button>
          <button aria-label="Maximise panel"><Fullscreen /></button>
        </FooterTools>
      </Footer>
    </Center>
    <RightRail>
      {rightTools.map((g) => (
        <RailGroup key={g[0][0]}>
          {g.map(([name, icon]) => (
            <RailButton key={name} aria-label={name}>{icon}</RailButton>
          ))}
        </RailGroup>
      ))}
      <Bottom><RailButton aria-label="Help"><Help /></RailButton></Bottom>
    </RightRail>
  </Workspace>
);

/* ---------- taskbar ---------- */

const Bar = styled.footer`
  display: flex;
  height: 27px;
  background: #030303;
  color: #e6e6e6;
  font-size: 12px;
`;

const StartButton = styled.button`
  width: 33px;
`;

const Apps = styled.div`
  display: grid;
  grid-template-columns: repeat(25, 1fr);
  width: 872px;
`;

const AppButton = styled.button<{ $active?: boolean; $open?: boolean }>`
  background: ${(p) => (p.$active ? "#363636" : "none")};
  border-bottom: ${(p) => (p.$active || p.$open ? 1 : 0)}px solid #7d8790;
`;

const Tray = styled.div`
  display: flex;
  align-items: center;
  margin-left: auto;
`;

const TrayButton = styled.button<{ $w: number }>`
  width: ${(p) => p.$w}px;
  height: 100%;
`;

const Tile = ({ bg, children }: { bg: string; children?: React.ReactNode }) => (
  <Icon size={16} box={16}><rect width="16" height="16" rx="1" fill={bg} stroke="none" />{children}</Icon>
);
const Disc = ({ bg, children }: { bg: string; children?: React.ReactNode }) => (
  <Icon size={16} box={16}><circle cx="8" cy="8" r="8" fill={bg} stroke="none" />{children}</Icon>
);
const Letter = ({ x, fill = "#fff", size = 10, children }: { x: number; fill?: string; size?: number; children: string }) => (
  <text x={x} y="12" fontSize={size} fontWeight="700" fill={fill} stroke="none">{children}</text>
);

const apps: { name: string; icon: React.ReactNode; active?: boolean; open?: boolean }[] = [
  { name: "Search", icon: <Icon size={18}><circle cx="14" cy="9" r="7" strokeWidth="1.600" /><path d="m9 14-7 8" strokeWidth="1.600" /></Icon> },
  { name: "Task view", icon: <Icon size={19}><path d="M6 4h12v16H6zM3 6H1v12h2M21 6h2v12h-2" strokeWidth="1.500" /></Icon> },
  { name: "File Explorer", icon: <Icon size={16} box={16}><path d="M1 2h5l1 1h8v12H1z" fill="#f4d265" stroke="none" /><path d="M3 9h10v6h-2v-3H5v3H3z" fill="#49b3ec" stroke="none" /></Icon> },
  { name: "Skype", icon: <Disc bg="#14a5e8"><circle cx="4" cy="4" r="4" fill="#14a5e8" stroke="none" /><Letter x={5}>S</Letter></Disc> },
  { name: "TeamViewer", icon: <Tile bg="#1c6fd8"><circle cx="8" cy="8" r="6" fill="#fff" stroke="none" /><path d="M3.500 8h9M5.500 6l-2 2 2 2M10.500 6l2 2-2 2" stroke="#1c6fd8" strokeWidth="1.500" /></Tile> },
  { name: "Opera", icon: <Icon size={16} box={16}><ellipse cx="8" cy="8" rx="5.500" ry="6" stroke="#e21b2c" strokeWidth="3.500" /></Icon> },
  { name: "Chrome", active: true, icon: <Disc bg="#4caf50"><path d="M1 4a8 8 0 0 1 14 0l.5 1.500H8L5 9z" fill="#e34133" stroke="none" /><path d="M15.500 5.500A8 8 0 0 1 8 16l3.500-6-1-4.500z" fill="#fbc116" stroke="none" /><circle cx="8" cy="8" r="3.300" fill="#4a8af4" stroke="#fff" /></Disc> },
  { name: "Telegram", open: true, icon: <Disc bg="#2ba2dc"><path d="m3 8 9.500-4-1.500 8.500-3-2-1.500 1.500-.5-3z" fill="#fff" stroke="none" /></Disc> },
  { name: "Camtasia", open: true, icon: <Icon size={16} box={16}><path d="M2 0h12v16H2z" fill="#e8483d" stroke="none" /><path d="M11 4.500H6v7h5" stroke="#fff" strokeWidth="2" /></Icon> },
  { name: "TSZ", icon: <Icon size={16} box={16}><path d="M1 5h5M3.500 5v6M10 5H7v3h3v3H7M11 5h4l-4 6h4" strokeWidth="1.300" /></Icon> },
  { name: "Photoshop", icon: <Icon size={16} box={16}><path d="M.5.5h15v15H.5z" fill="#071e36" stroke="#3ca3e6" /><Letter x={3} size={9} fill="#4cb1f0">Ps</Letter></Icon> },
  { name: "Statistics", icon: <Disc bg="#f4841c"><path d="M5 11V9M8 11V7M11 11V4" stroke="#fff" strokeWidth="2" /></Disc> },
  { name: "GP", icon: <Icon size={16} box={16}><path d="M8 2H3v6h5V2M8 8v5H3" stroke="#a07a26" strokeWidth="1.600" /><path d="M8 2h5v8H8" stroke="#6d7a20" strokeWidth="1.600" /></Icon> },
  { name: "Binance", icon: <Icon size={16} box={16}><path d="M.5.5h15v15H.5z" fill="#151208" stroke="#b98f2b" /><path d="m8 3 5 5-5 5-5-5zM8 6l2 2-2 2-2-2z" stroke="#e3b53a" /></Icon> },
  { name: "Notepad", icon: <Icon size={16} box={16}><path d="M4 1h11l-2 14H2z" fill="#a7d5de" stroke="#e8f5f7" /><path d="M5 5h7M5 8h6M4 11h7" stroke="#6ba1ad" /></Icon> },
  { name: "Paint", icon: <Icon size={16} box={16}><ellipse cx="7" cy="9" rx="6.500" ry="5.500" fill="#cfe2f1" stroke="none" /><circle cx="4" cy="8" r="1.500" fill="#e23a2c" stroke="none" /><circle cx="8" cy="6" r="1.500" fill="#3fae48" stroke="none" /><circle cx="6" cy="12" r="1.500" fill="#2970c4" stroke="none" /><path d="m12 13 2-11" stroke="#e5952b" strokeWidth="2.200" /></Icon> },
  { name: "Snipping Tool", icon: <Icon size={16} box={16}><ellipse cx="7" cy="6" rx="6.500" ry="5" fill="#e8dcd8" stroke="#c98a84" /><path d="m5 3 5 8" stroke="#b5302c" strokeWidth="1.800" /><path d="m10 4-3 5" stroke="#666" /><circle cx="9" cy="14" r="1.500" stroke="#3b7fd0" /><circle cx="13" cy="12" r="1.500" stroke="#3b7fd0" /></Icon> },
  { name: "Word", icon: <Tile bg="#2a5699"><path d="M10 2h5v12h-5z" fill="#fff" stroke="none" /><Letter x={0}>W</Letter></Tile> },
  { name: "PowerPoint", icon: <Tile bg="#d24625"><path d="M10 2h5v12h-5z" fill="#f4d9d0" stroke="none" /><Letter x={2}>P</Letter></Tile> },
  { name: "Remote", icon: <Icon size={16} box={16}><path d="M1 1h11v8H1z" fill="#2335c9" stroke="#c9cdd8" /><path d="M3 12h7v2H3z" fill="#b9bcc8" stroke="none" /><circle cx="12" cy="12" r="3.500" fill="#eee" stroke="#5a9a4a" /></Icon> },
  { name: "N", icon: <Disc bg="#fff"><path d="M5 12 6 4l4 8 1-8" stroke="#6aa51f" strokeWidth="1.800" /></Disc> },
  { name: "Charts", icon: <Icon size={16} box={16}><path d="M2 2h12l-3 4H2z" fill="#2f6d6c" stroke="none" /><path d="m2 7 6 0-5 6z" fill="#d23a50" stroke="none" /><circle cx="12" cy="12" r="3" fill="#28a8e0" stroke="none" /></Icon> },
  { name: "Matrix", icon: <Tile bg="#0b2940"><path d="m2 3 4 4M14 3l-4 4M2 13l4-4M14 13l-4-4M8 1v4M8 11v4M1 8h4M11 8h4M5 2l3 3 3-3M5 14l3-3 3 3" stroke="#49a9d4" /></Tile> },
  { name: "Sync", icon: <Disc bg="#f1f4fb"><path d="M10 4C6 3 3 6 5 9l2 1M6 12c4 1 7-2 5-5L9 6" stroke="#3b7be0" strokeWidth="1.800" /></Disc> },
  { name: "Zoom", icon: <Disc bg="#eaf3ff"><circle cx="8" cy="8" r="7" fill="#2f87f0" stroke="none" /><path d="M4 6h5v4H4zM10 7.500 12 6v4l-2-1.500z" fill="#fff" stroke="#fff" /></Disc> },
];

const Taskbar = () => (
  <Bar>
    <StartButton aria-label="Start"><Icon size={16} box={16}><path d="M0 2.500 7 1.500V7.500H0zM8 1.300 16 0V7.500H8zM0 8.500h7v6L0 13.500zM8 8.500h8V16l-8-1.300z" fill="#fff" stroke="none" /></Icon></StartButton>
    <Apps>
      {apps.map((a) => (
        <AppButton key={a.name} $active={a.active} $open={a.open} aria-label={a.name}>{a.icon}</AppButton>
      ))}
    </Apps>
    <Tray>
      <TrayButton $w={22} aria-label="Hidden icons"><Chevron size={12} up /></TrayButton>
      <TrayButton $w={23} aria-label="Volume"><Icon size={17}><path d="M2 9v6h4l5 5V4L6 9zM14 9c1 2 1 4 0 6M17 7c2 3 2 7 0 10M20 5c3 4 3 10 0 14" strokeWidth="1.500" /></Icon></TrayButton>
      <TrayButton $w={23} aria-label="Power"><Icon size={17}><path d="M7 9h15v10H7v-5M12 11l5 6M17 11l-5 6M2 4v4h5V4M4.500 8v11" strokeWidth="1.500" /></Icon></TrayButton>
      <TrayButton $w={23} aria-label="Bluetooth"><Icon size={16} box={16}><ellipse cx="8" cy="8" rx="5.500" ry="8" fill="#0f4f94" stroke="none" /><path d="m5 5 6 6-3 3V2l3 3-6 6" stroke="#fff" /></Icon></TrayButton>
      <TrayButton $w={23} aria-label="Network"><Icon size={16}><path d="M3 21C3 11 11 4 21 4M8 21c0-7 6-12 13-12M13 21c0-4 4-7 8-7M18 21c0-1 1-2 3-2" strokeWidth="1.800" /></Icon></TrayButton>
      <TrayButton $w={32}>ENG</TrayButton>
      <TrayButton $w={38}>21:48</TrayButton>
      <TrayButton $w={40} aria-label="Notifications"><Icon size={17}><path d="M2 2h20v16h-7l-3 4-3-4H2z" fill="#fff" stroke="none" /><path d="M6 7h12M6 10h12M6 13h8" stroke="#111" strokeWidth="1.500" /></Icon></TrayButton>
      <TrayButton $w={10} aria-label="Show desktop"><Rule $h={27} $c="#4a4a4a" /></TrayButton>
    </Tray>
  </Bar>
);

const App = () => (
  <Page>
    <Global />
    <Browser />
    <TradingView />
    <Taskbar />
    <RailFold aria-label="Collapse toolbar"><Icon size={7} box={8}><path d="M5 1 2 4l3 3" /></Icon></RailFold>
    <Recorder />
  </Page>
);

export default App;
